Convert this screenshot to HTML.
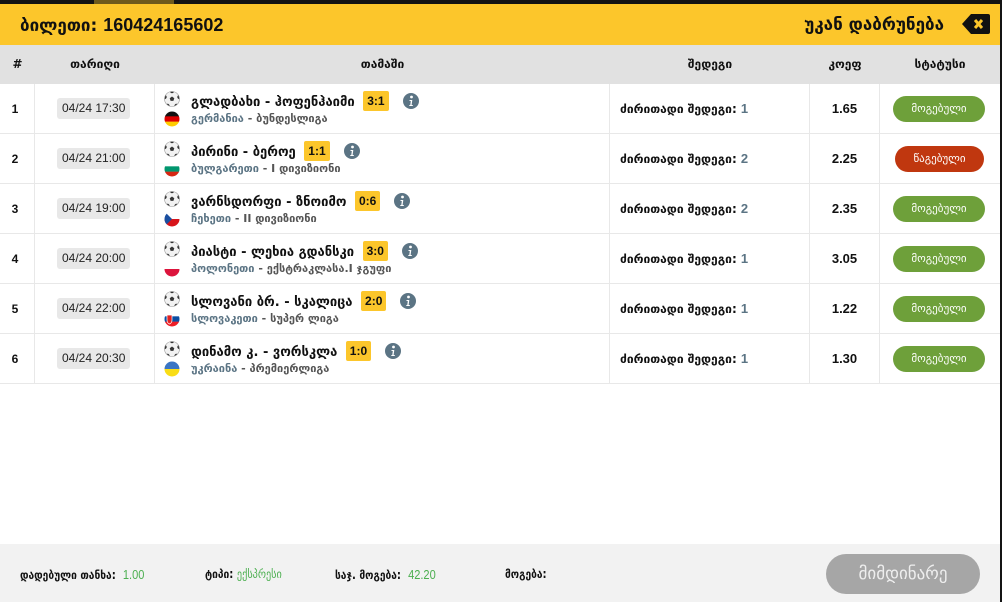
<!DOCTYPE html>
<html><head><meta charset="utf-8">
<style>
*{margin:0;padding:0;box-sizing:border-box}
body{width:1002px;height:602px;background:#141414;position:relative;overflow:hidden;font-family:"Liberation Sans","DejaVu Sans",sans-serif;color:#111}
.top{position:absolute;left:0;top:0;width:1002px;height:4px;background:#131313}
.top i{position:absolute;left:94px;top:0;width:80px;height:4px;background:#6f5a1c}
.modal{position:absolute;left:0;top:4px;width:1000px;height:598px;background:#fff}
.hdr{height:41px;background:#fcc62b;position:relative}
.hdr .t{position:absolute;left:20px;top:11px;font-size:17px;font-weight:bold;font-family:"DejaVu Sans","Liberation Sans",sans-serif}
.hdr .t span{font-family:"Liberation Sans",sans-serif;font-size:18px}
.hdr .b{position:absolute;right:56px;top:11px;font-size:17px;font-weight:bold;font-family:"DejaVu Sans",sans-serif}
.hdr svg{position:absolute;left:962px;top:10px}
.th{height:39px;background:#e1e1e1;position:relative;font-family:"DejaVu Sans",sans-serif;font-weight:bold;font-size:12px}
.th div{position:absolute;top:12px;text-align:center}
.row{height:50px;border-bottom:1px solid #e8e8e8;position:relative;font-size:12px}
.c{position:absolute;top:0;height:50px;border-right:1px solid #e8e8e8}
.num{left:0;width:35px;font-weight:bold;text-align:center;line-height:50px;padding-right:4px}
.date{left:35px;width:120px}
.date span{position:absolute;left:22px;top:14px;background:#e8e8e8;border-radius:3px;padding:3px 5px;font-size:12px;line-height:15px;color:#222}
.match{left:155px;width:455px}
.res{left:610px;width:200px;font-family:"DejaVu Sans",sans-serif;font-weight:bold;font-size:12px;padding:17px 0 0 10px}
.res b{color:#5b7484;font-family:"Liberation Sans",sans-serif;font-size:13px}
.coef{left:810px;width:70px;text-align:center;line-height:50px;font-weight:bold;font-size:13px}
.st{left:880px;width:120px;border-right:none}
.st span{position:absolute;left:13px;top:12px;width:92px;height:26px;border-radius:13px;background:#6ea03a;color:#fff;text-align:center;line-height:26px;font-family:"DejaVu Sans",sans-serif;font-size:11px}
.st span.r{background:#c0370f;left:15px;width:89px}
.ball{position:absolute;left:9px;top:7px}
.flag{position:absolute;left:9px;top:27px}
.mt{position:absolute;left:36px;top:7px;font-family:"DejaVu Sans",sans-serif;font-weight:bold;font-size:13px;white-space:nowrap}
.sc{display:inline-block;background:#fcc62b;font-family:"Liberation Sans",sans-serif;font-size:12px;padding:3px 4px;border-radius:2px;margin-left:4px;vertical-align:1px}
.info{display:inline-block;vertical-align:-3px;margin-left:14px}
.lg{position:absolute;left:36px;top:28px;font-family:"DejaVu Sans",sans-serif;font-size:11px;color:#555;white-space:nowrap;font-weight:bold}
.lg b{color:#5b7484}
.ft{position:absolute;left:0;top:540px;width:1000px;height:58px;background:#f2f2f2;font-family:"DejaVu Sans",sans-serif;font-size:12px;font-weight:bold}
.ft .l{position:absolute;top:23px;transform:scaleX(.85);transform-origin:left}
.ft .g{color:#4caf50;font-weight:normal;font-family:"Liberation Sans",sans-serif;font-size:13px}
.btn{position:absolute;left:826px;top:10px;width:154px;height:40px;border-radius:20px;background:#a6a6a6;color:#eee;text-align:center;line-height:40px;font-size:17px;font-weight:normal}
</style></head><body>
<div class="top"><i></i></div>
<div class="modal">
<div class="hdr"><div class="t">ბილეთი: <span>160424165602</span></div><div class="b">უკან დაბრუნება</div>
<svg width="28" height="20" viewBox="0 0 28 20"><path d="M9 0H26Q28 0 28 2V18Q28 20 26 20H9L0 10Z" fill="#111"/><path d="M13 6L20 14M20 6L13 14" stroke="#fcc62b" stroke-width="3"/></svg></div>
<div class="th"><div style="left:0;width:35px">#</div><div style="left:35px;width:120px">თარიღი</div><div style="left:155px;width:455px">თამაში</div><div style="left:610px;width:200px">შედეგი</div><div style="left:810px;width:70px">კოეფ</div><div style="left:880px;width:120px">სტატუსი</div></div>

<div id="rows"></div>
<div class="ft">
<div class="l" style="left:20px">დადებული თანხა: &nbsp;<span class="g">1.00</span></div>
<div class="l" style="left:205px">ტიპი: <span class="g" style="font-family:'DejaVu Sans';font-size:12px">ექსპრესი</span></div>
<div class="l" style="left:335px">საჯ. მოგება: &nbsp;<span class="g">42.20</span></div>
<div class="l" style="left:505px">მოგება:</div>
<div class="btn">მიმდინარე</div>
</div>
</div>
<script>
var ball='<svg class="ball" width="16" height="16" viewBox="0 0 16 16"><defs><clipPath id="bc"><circle cx="8" cy="8" r="7.5"/></clipPath></defs><circle cx="8" cy="8" r="7.5" fill="#f2f2f2"/><g clip-path="url(#bc)" fill="#333"><path d="M8 5.5L10.3 7.2 9.4 9.9H6.6L5.7 7.2Z"/><circle cx="8" cy="0" r="2.2"/><circle cx="0.5" cy="6" r="2.2"/><circle cx="15.5" cy="6" r="2.2"/><circle cx="3.5" cy="15" r="2.2"/><circle cx="12.5" cy="15" r="2.2"/></g><circle cx="8" cy="8" r="7.5" fill="none" stroke="#999" stroke-width=".6"/></svg>';
function flag(c,v){var s='<svg class="flag" width="16" height="16" viewBox="0 0 16 16"><defs><clipPath id="k'+c.join('')+'"><circle cx="8" cy="8" r="7.5"/></clipPath></defs><g clip-path="url(#k'+c.join('')+')">';
var h=16/c.length;for(var i=0;i<c.length;i++)s+='<rect x="0" y="'+(i*h)+'" width="16" height="'+(h+0.2)+'" fill="'+c[i]+'"/>';
if(v=='cz')s+='<path d="M0 0L8 8L0 16Z" fill="#1a4fa0"/>';if(v=='sk')s+='<path d="M3 4H8V9Q8 12 5.5 13Q3 12 3 9Z" fill="#e02020" stroke="#fff" stroke-width=".7"/>';
return s+'</g></svg>';}
var info='<svg class="info" width="16" height="16" viewBox="0 0 16 16"><circle cx="8" cy="8" r="8" fill="#5b7484"/><circle cx="8.5" cy="4" r="1.4" fill="#fff"/><path d="M6.5 7H9.3L8.6 12H9.8V13H6.3V12H7.3L7.8 8H6.5Z" fill="#fff"/></svg>';
var d=[["04/24 17:30","გლადბახი - ჰოფენჰაიმი","3:1","გერმანია","ბუნდესლიგა",["#111","#d00","#fc0"],"","1","1.65",0],
["04/24 21:00","პირინი - ბეროე","1:1","ბულგარეთი","I დივიზიონი",["#fff","#00966e","#d62612"],"","2","2.25",1],
["04/24 19:00","ვარნსდორფი - ზნოიმო","0:6","ჩეხეთი","II დივიზიონი",["#fff","#d7141a"],"cz","2","2.35",0],
["04/24 20:00","პიასტი - ლეხია გდანსკი","3:0","პოლონეთი","ექსტრაკლასა.I ჯგუფი",["#fff","#dc143c"],"","1","3.05",0],
["04/24 22:00","სლოვანი ბრ. - სკალიცა","2:0","სლოვაკეთი","სუპერ ლიგა",["#fff","#0b4ea2","#ee1c25"],"sk","1","1.22",0],
["04/24 20:30","დინამო კ. - ვორსკლა","1:0","უკრაინა","პრემიერლიგა",["#3a75c4","#f9dd16"],"","1","1.30",0]];
var h='';d.forEach(function(r,i){h+='<div class="row"><div class="c num">'+(i+1)+'</div><div class="c date"><span>'+r[0]+'</span></div><div class="c match">'+ball+flag(r[5],r[6])+'<div class="mt">'+r[1]+' <span class="sc">'+r[2]+'</span>'+info+'</div><div class="lg"><b>'+r[3]+'</b> - '+r[4]+'</div></div><div class="c res">ძირითადი შედეგი: <b>'+r[7]+'</b></div><div class="c coef">'+r[8]+'</div><div class="c st">'+(r[9]?'<span class="r">წაგებული</span>':'<span>მოგებული</span>')+'</div></div>';});
document.getElementById('rows').innerHTML=h;
</script>
</body></html>
